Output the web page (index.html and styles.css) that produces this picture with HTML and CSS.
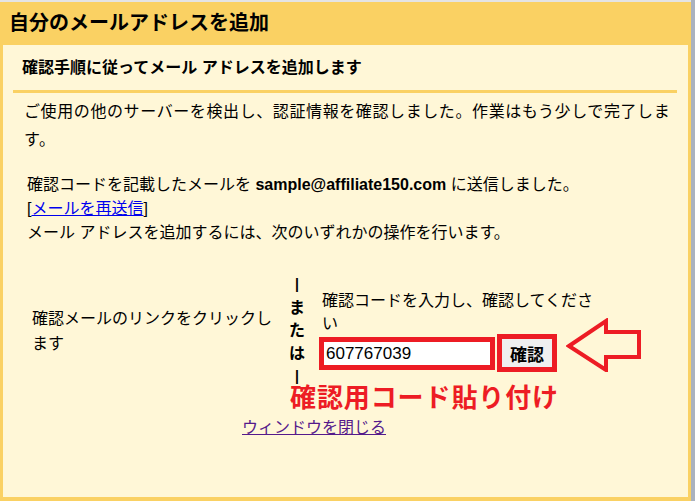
FILE: index.html
```html
<!DOCTYPE html>
<html lang="ja">
<head>
<meta charset="utf-8">
<title>自分のメールアドレスを追加</title>
<link rel="stylesheet" href="styles.css">
</head>
<body>
<div class="win">
  <div class="header">自分のメールアドレスを追加</div>
  <div class="panel">
    <div class="subhead">確認手順に従ってメール アドレスを追加します</div>
    <div class="rule"></div>
    <p class="p1">ご使用の他のサーバーを検出し、認証情報を確認しました。作業はもう少しで完了しま<br>す。</p>
    <div class="p2">確認コードを記載したメールを <b class="mail">sample@affiliate150.com</b> に送信しました。<br>[<a class="resend" href="#">メールを再送信</a>]<br>メール アドレスを追加するには、次のいずれかの操作を行います。</div>
    <div class="choice">
      <div class="opt-left">確認メールのリンクをクリックします</div>
      <div class="or"><span class="bar">|</span><span>ま</span><span>た</span><span>は</span><span class="bar">|</span></div>
      <div class="opt-right">
        <div class="code-label">確認コードを入力し、確認してください</div>
        <div class="code-row">
          <input class="code-input" type="text" value="607767039">
          <button class="btn" type="button">確認</button>
          <svg class="arrow" width="76" height="54" viewBox="0 0 76 54">
            <polygon points="3,28 40,3 40,14 73,14 73,39 40,39 40,52" fill="none" stroke="#ed1c24" stroke-width="4" stroke-linejoin="miter"/>
          </svg>
        </div>
      </div>
      <div class="note">確認用コード貼り付け</div>
    </div>
    <div class="close"><a class="close-link" href="#">ウィンドウを閉じる</a></div>
  </div>
</div>
</body>
</html>
```

FILE: styles.css
```css
html, body {
  margin: 0;
  padding: 0;
}
body {
  background: #aab2bf;
  width: 695px;
  height: 501px;
  overflow: hidden;
  font-family: "Liberation Sans", "Noto Sans CJK JP", sans-serif;
  color: #000;
}
.win {
  width: 691px;
  height: 501px;
  box-sizing: border-box;
  background: #fad163;
  border-top: 2px solid #e4e4e4;
  display: flex;
  flex-direction: column;
}
.header {
  height: 43px;
  line-height: 43px;
  padding-left: 9px;
  font-size: 20px;
  font-weight: bold;
}
.panel {
  flex: 1;
  margin: 0 3px 4px 3px;
  background: #fff7d7;
  display: flex;
  flex-direction: column;
}
.subhead {
  height: 45px;
  line-height: 45px;
  padding-left: 19px;
  font-size: 16px;
  font-weight: bold;
}
.rule {
  height: 3px;
  margin: 0 11px 0 10px;
  background: #fad163;
}
.p1 {
  margin: 5px 0 0 0;
  padding: 0 0 0 21px;
  font-size: 16px;
  line-height: 28px;
  letter-spacing: 0.6px;
  white-space: nowrap;
}
.p2 {
  margin-top: 19px;
  padding-left: 24px;
  font-size: 16px;
  line-height: 24px;
}
.mail {
  font-weight: bold;
}
.resend {
  color: #0000ee;
  text-decoration: underline;
}
.choice {
  position: relative;
  margin-top: 28px;
  padding-left: 29px;
  display: flex;
  align-items: center;
  font-size: 16px;
}
.opt-left {
  flex: none;
  width: 253px;
  line-height: 25px;
}
.or {
  flex: none;
  width: 24px;
  display: flex;
  flex-direction: column;
  align-items: center;
  font-weight: bold;
  line-height: 23px;
}
.or .bar {
  font-size: 14px;
}
.opt-right {
  flex: none;
  width: 280px;
  margin-left: 10px;
}
.code-label {
  padding-left: 3px;
  line-height: 23px;
}
.code-row {
  display: flex;
  align-items: flex-end;
  margin-top: -1px;
}
.code-input {
  flex: none;
  width: 176px;
  height: 33px;
  box-sizing: border-box;
  border: 5px solid #ed1c24;
  margin: 0 0 2px 0;
  padding: 0 0 0 2px;
  background: #fff;
  font-family: "Liberation Sans", sans-serif;
  font-size: 17px;
  color: #000;
  outline: none;
}
.btn {
  flex: none;
  width: 60px;
  height: 38px;
  box-sizing: border-box;
  margin: 0 0 0 2px;
  padding: 0;
  border: 5px solid #ed1c24;
  background: #efefef;
  font-family: "Liberation Sans", "Noto Sans CJK JP", sans-serif;
  font-size: 17px;
  font-weight: bold;
  color: #000;
  white-space: nowrap;
}
.arrow {
  flex: none;
  margin: -16px 0 0 9px;
  display: block;
}
.note {
  position: absolute;
  left: 287px;
  top: 110px;
  line-height: 30px;
  font-size: 26px;
  font-weight: bold;
  letter-spacing: 0.9px;
  color: #ed1c24;
  white-space: nowrap;
}
.close {
  margin-top: 28px;
  padding-left: 239px;
  font-size: 16px;
  line-height: 24px;
}
.close-link {
  color: #551a8b;
  text-decoration: underline;
}
```
